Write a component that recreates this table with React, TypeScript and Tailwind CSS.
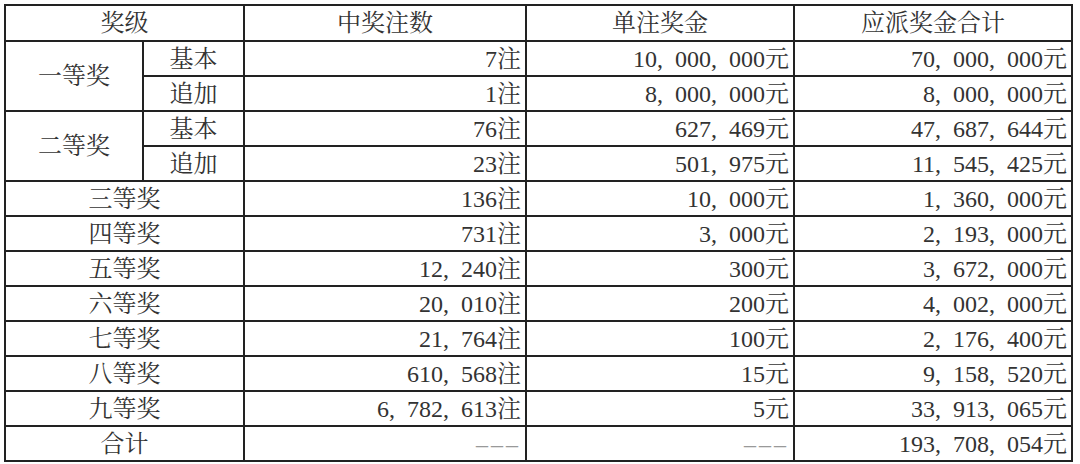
type Row = {
  level: string;
  sub?: string;
  count: string;
  unit: string;
  total: string;
};

const rows: Row[] = [
  { level: "一等奖", sub: "基本", count: "7注", unit: "10,000,000元", total: "70,000,000元" },
  { level: "一等奖", sub: "追加", count: "1注", unit: "8,000,000元", total: "8,000,000元" },
  { level: "二等奖", sub: "基本", count: "76注", unit: "627,469元", total: "47,687,644元" },
  { level: "二等奖", sub: "追加", count: "23注", unit: "501,975元", total: "11,545,425元" },
  { level: "三等奖", count: "136注", unit: "10,000元", total: "1,360,000元" },
  { level: "四等奖", count: "731注", unit: "3,000元", total: "2,193,000元" },
  { level: "五等奖", count: "12,240注", unit: "300元", total: "3,672,000元" },
  { level: "六等奖", count: "20,010注", unit: "200元", total: "4,002,000元" },
  { level: "七等奖", count: "21,764注", unit: "100元", total: "2,176,400元" },
  { level: "八等奖", count: "610,568注", unit: "15元", total: "9,158,520元" },
  { level: "九等奖", count: "6,782,613注", unit: "5元", total: "33,913,065元" },
];

// commas in the source are followed by a wide gap
function Num({ value }: { value: string }) {
  if (value === "---") {
    return <span className="tracking-[3px] text-[#999]">–––</span>;
  }
  return <span>{value.replace(/,/g, ",\u2002")}</span>;
}

const cell = "border-2 border-[#222] h-[35px] p-0 leading-none";

export default function App() {
  return (
    <div className="w-[1080px] h-[464px] bg-white pl-[4px] pt-[4px] overflow-hidden">
      <table
        className="table-fixed border-collapse text-[24px] text-[#333] w-[1069px]"
        style={{ fontFamily: '"Liberation Serif", "Noto Serif CJK SC", "Noto Sans CJK SC", serif' }}
      >
        <colgroup>
          <col className="w-[138px]" />
          <col className="w-[101px]" />
          <col className="w-[282px]" />
          <col className="w-[268px]" />
          <col className="w-[278px]" />
        </colgroup>
        <thead>
          <tr>
            <th colSpan={2} className={`${cell} h-[36px] font-normal text-center`}>奖级</th>
            <th className={`${cell} h-[36px] font-normal text-center`}>中奖注数</th>
            <th className={`${cell} h-[36px] font-normal text-center`}>单注奖金</th>
            <th className={`${cell} h-[36px] font-normal text-center`}>应派奖金合计</th>
          </tr>
        </thead>
        <tbody>
          {rows.map((r, i) => {
            const first = r.sub && (i === 0 || rows[i - 1].level !== r.level);
            return (
              <tr key={i}>
                {r.sub ? (
                  first && (
                    <td rowSpan={2} className={`${cell} text-center`}>
                      {r.level}
                    </td>
                  )
                ) : (
                  <td colSpan={2} className={`${cell} text-center`}>
                    {r.level}
                  </td>
                )}
                {r.sub && <td className={`${cell} text-center`}>{r.sub}</td>}
                <td className={`${cell} text-right pr-[4px]`}>
                  <Num value={r.count} />
                </td>
                <td className={`${cell} text-right pr-[4px]`}>
                  <Num value={r.unit} />
                </td>
                <td className={`${cell} text-right pr-[4px]`}>
                  <Num value={r.total} />
                </td>
              </tr>
            );
          })}
          <tr>
            <td colSpan={2} className={`${cell} text-center`}>合计</td>
            <td className={`${cell} text-right pr-[4px]`}>
              <Num value="---" />
            </td>
            <td className={`${cell} text-right pr-[4px]`}>
              <Num value="---" />
            </td>
            <td className={`${cell} text-right pr-[4px]`}>
              <Num value="193,708,054元" />
            </td>
          </tr>
        </tbody>
      </table>
    </div>
  );
}
